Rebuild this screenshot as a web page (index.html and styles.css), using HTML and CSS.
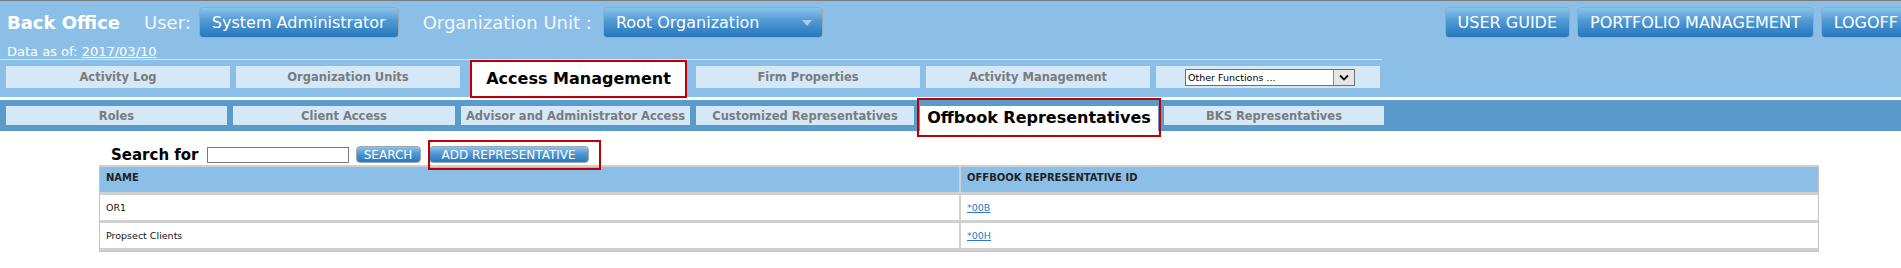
FILE: index.html
```html
<!DOCTYPE html>
<html lang="en">

<head>
    <meta charset="UTF-8">
    <title>Back Office - Offbook Representatives</title>
    <link rel="stylesheet" href="styles.css">
</head>

<body>
    <header class="masthead">
        <div class="toprow">
            <span class="brand">Back Office</span>
            <span class="top-label user-label">User:</span>
            <button type="button" class="blue-btn">System Administrator</button>
            <span class="top-label org-label">Organization Unit :</span>
            <div class="blue-btn org-select">
                Root Organization
                <span class="caret"></span>
            </div>
            <div class="top-links">
                <button type="button" class="blue-btn">USER GUIDE</button>
                <button type="button" class="blue-btn">PORTFOLIO MANAGEMENT</button>
                <button type="button" class="blue-btn">LOGOFF</button>
            </div>
        </div>
        <div class="asof">Data as of: <a href="#">2017/03/10</a></div>
        <nav class="main-tabs">
            <div class="tab">Activity Log</div>
            <div class="tab">Organization Units</div>
            <div class="tab active">Access Management</div>
            <div class="tab">Firm Properties</div>
            <div class="tab">Activity Management</div>
            <div class="tab tab-select">
                <div class="fake-select">
                    <span class="fake-select-text">Other Functions ...</span>
                    <span class="fake-select-arrow">
                        <svg width="10" height="7" viewBox="0 0 10 7"><path d="M1 1.5 L5 5.5 L9 1.5" fill="none" stroke="#111" stroke-width="1.8"/></svg>
                    </span>
                </div>
            </div>
        </nav>
    </header>

    <nav class="sub-bar">
        <div class="sub-tabs">
            <div class="tab">Roles</div>
            <div class="tab">Client Access</div>
            <div class="tab">Advisor and Administrator Access</div>
            <div class="tab">Customized Representatives</div>
            <div class="tab active marked">Offbook Representatives</div>
            <div class="tab">BKS Representatives</div>
        </div>
    </nav>

    <section class="content">
        <div class="search-row">
            <label for="search-text" class="search-label">Search for</label>
            <input type="text" id="search-text" class="search-input">
            <button type="button" class="small-btn search-btn">SEARCH</button>
            <button type="button" class="small-btn add-btn marked">ADD REPRESENTATIVE</button>
        </div>

        <table class="rep-table">
            <thead>
                <tr>
                    <th class="col-name">NAME</th>
                    <th>OFFBOOK REPRESENTATIVE ID</th>
                </tr>
            </thead>
            <tbody>
                <tr>
                    <td class="col-name">OR1</td>
                    <td><a href="#">*00B</a></td>
                </tr>
                <tr>
                    <td class="col-name">Propsect Clients</td>
                    <td><a href="#">*00H</a></td>
                </tr>
            </tbody>
        </table>
    </section>
</body>

</html>
```

FILE: styles.css
```css
/* page */
body {
    margin: 0;
    padding: 0;
    font-family: "DejaVu Sans", Verdana, sans-serif;
    background-color: #fff;
    overflow: hidden;
}

/* top header */
.masthead {
    background-color: #8cbfe7;
    border-top: 1px solid #7a7a7a;
    height: 96px;
}

.toprow {
    display: flex;
    align-items: center;
    width: 1911px;
    height: 31px;
    margin-top: 6px;
    padding-left: 7px;
    box-sizing: border-box;
}

.brand {
    color: #fff;
    font-weight: bold;
    font-size: 18px;
    margin-right: 24px;
}

.top-label {
    color: #f2f6fa;
    font-size: 18px;
}

.user-label {
    margin-right: 8px;
}

.org-label {
    margin-left: 24px;
    margin-right: 11px;
}

.blue-btn {
    height: 31px;
    padding: 0 12px;
    border: 1px solid #9aa9b6;
    border-radius: 4px;
    background: linear-gradient(to bottom, #8cc3ec 0%, #4f98d3 45%, #2677bd 100%);
    color: #fff;
    font-family: "DejaVu Sans", Verdana, sans-serif;
    font-size: 16px;
    box-sizing: border-box;
    display: inline-flex;
    align-items: center;
}

.org-select {
    position: relative;
    width: 220px;
    padding-left: 12px;
}

.caret {
    position: absolute;
    right: 10px;
    top: 12px;
    border-left: 5px solid transparent;
    border-right: 5px solid transparent;
    border-top: 6px solid #a9cdec;
}

.top-links {
    display: flex;
    gap: 7px;
    margin-left: auto;
}

.asof {
    width: 1382px;
    padding: 6px 0 0 7px;
    line-height: 15px;
    font-size: 13px;
    color: #fff;
    border-bottom: 1px solid #cfe4f5;
    box-sizing: border-box;
    height: 22px;
}

.asof a {
    color: #fff;
}

/* tabs */
.main-tabs {
    display: grid;
    grid-template-columns: repeat(6, 224px);
    grid-template-rows: 37px;
    column-gap: 6px;
    padding-left: 6px;
    align-items: start;
}

.tab {
    background-color: #d4e8f7;
    color: #7b7b7b;
    font-weight: bold;
    font-size: 11.5px;
    display: flex;
    align-items: center;
    justify-content: center;
    white-space: nowrap;
}

.main-tabs .tab {
    margin-top: 6px;
    height: 22px;
}

.main-tabs .tab.active {
    margin: 0 3px 0 4px;
    height: 38px;
    border: 2px solid #c00000;
    box-sizing: border-box;
    background-color: #fff;
    color: #000;
    font-size: 16px;
    padding-bottom: 2px;
}

.tab-select {
    justify-content: flex-start;
    padding-left: 29px;
}

.fake-select {
    display: flex;
    width: 170px;
    height: 17px;
    border: 1px solid #707070;
    background-color: #fff;
    box-sizing: border-box;
}

.fake-select-text {
    flex: 1;
    font-weight: normal;
    font-size: 9.5px;
    color: #000;
    padding-left: 2px;
    line-height: 15px;
}

.fake-select-arrow {
    width: 20px;
    border-left: 1px solid #8a8a8a;
    background-color: #e6e6e6;
    display: flex;
    align-items: center;
    justify-content: center;
}

.sub-bar {
    margin-top: 3px;
    height: 31px;
    background-color: #5b9bcb;
    padding-top: 6px;
    box-sizing: border-box;
}

.sub-tabs {
    display: grid;
    grid-template-columns: 221px 222px 229px 218px 238px 220px;
    column-gap: 6px;
    padding-left: 6px;
    align-items: start;
}

.sub-tabs .tab {
    height: 19px;
}

.sub-tabs .tab.active {
    height: 25px;
    background-color: #fff;
    color: #000;
    font-size: 16px;
    padding-bottom: 3px;
    box-sizing: border-box;
}

/* red highlight boxes */
.marked {
    position: relative;
}

.sub-tabs .marked::after {
    content: "";
    position: absolute;
    top: -8px;
    bottom: -6px;
    left: -3px;
    right: -3px;
    border: 2px solid #c00000;
}

.add-btn.marked::after {
    content: "";
    position: absolute;
    top: -7px;
    bottom: -8px;
    left: -2px;
    right: -13px;
    border: 2px solid #c00000;
}

/* search + table */
.content {
    padding-left: 99px;
}

.search-row {
    display: flex;
    align-items: center;
    height: 17px;
    margin-top: 15px;
    padding-left: 12px;
}

.search-label {
    font-weight: bold;
    font-size: 15px;
    margin-right: 8px;
}

.search-input {
    width: 142px;
    height: 16px;
    border: 1px solid #7a7a7a;
    padding: 0;
    box-sizing: border-box;
    margin: 0 7px 0 0;
}

.small-btn {
    height: 17px;
    padding: 0;
    border: 1px solid #9aa9b6;
    border-radius: 4px;
    background: linear-gradient(to bottom, #8cc3ec 0%, #4f98d3 45%, #2677bd 100%);
    color: #fff;
    font-family: "DejaVu Sans", Verdana, sans-serif;
    font-size: 12px;
    box-sizing: border-box;
}

.search-btn {
    width: 65px;
    margin-right: 8px;
}

.add-btn {
    width: 160px;
}

.rep-table {
    width: 1720px;
    margin-top: 2px;
    border-collapse: separate;
    border-spacing: 0;
    border: 1px solid #c4c4c4;
    border-top: 2px solid #d0d0d0;
}

.rep-table th {
    background-color: #8cbfe7;
    color: #222;
    font-size: 10px;
    text-align: left;
    height: 28px;
    padding: 0 0 4px 6px;
    border-bottom: 3px solid #d0d0d0;
    box-sizing: border-box;
}

.rep-table td {
    font-size: 9.5px;
    color: #111;
    height: 28px;
    padding: 0 0 0 6px;
    border-bottom: 3px solid #d0d0d0;
    box-sizing: border-box;
}

.rep-table .col-name {
    width: 861px;
    border-right: 2px solid #d0d0d0;
}

.rep-table a {
    color: #2a78cc;
}
```
